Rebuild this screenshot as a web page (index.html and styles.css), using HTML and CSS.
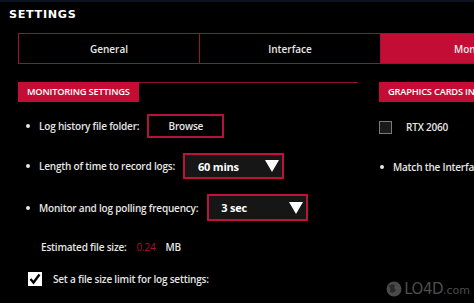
FILE: index.html
```html
<!DOCTYPE html>
<html lang="en">
<head>
    <meta charset="UTF-8">
    <meta name="viewport" content="width=device-width, initial-scale=1.0">
    <title>Settings</title>
    <link rel="stylesheet" href="styles.css">
</head>
<body>
    <div class="window">
        <h1 class="title">SETTINGS</h1>

        <div class="tabs">
            <div class="tab">General</div>
            <div class="tab">Interface</div>
            <div class="tab active">Monitoring</div>
        </div>

        <div class="content">
            <div class="panel left">
                <div class="section-head">
                    <div class="section-title">MONITORING SETTINGS</div>
                    <div class="section-line"></div>
                </div>

                <div class="row row-folder">
                    <span class="dot"></span>
                    <span class="label">Log history file folder:</span>
                    <button class="btn">Browse</button>
                </div>

                <div class="row row-length">
                    <span class="dot"></span>
                    <span class="label">Length of time to record logs:</span>
                    <div class="dropdown">
                        <span>60 mins</span>
                        <svg class="arrow" width="14" height="12" viewBox="0 0 14 12"><polygon points="0,0 14,0 7,12" fill="#fff"/></svg>
                    </div>
                </div>

                <div class="row row-poll">
                    <span class="dot"></span>
                    <span class="label">Monitor and log polling frequency:</span>
                    <div class="dropdown">
                        <span>3 sec</span>
                        <svg class="arrow" width="14" height="12" viewBox="0 0 14 12"><polygon points="0,0 14,0 7,12" fill="#fff"/></svg>
                    </div>
                </div>

                <div class="row row-size">
                    <span class="label">Estimated file size:</span>
                    <span class="value">0.24</span>
                    <span class="label">MB</span>
                </div>

                <div class="row row-limit">
                    <svg class="check" width="14" height="14" viewBox="0 0 14 14">
                        <rect width="14" height="14" fill="#fff"/>
                        <polyline points="2.5,7 5.5,10.5 11.5,2.5" fill="none" stroke="#000" stroke-width="2.4"/>
                    </svg>
                    <span class="label">Set a file size limit for log settings:</span>
                </div>
            </div>

            <div class="panel right">
                <div class="section-title">GRAPHICS CARDS INFORMATION</div>

                <div class="row row-gpu">
                    <span class="box"></span>
                    <span class="label">RTX 2060</span>
                </div>

                <div class="row row-match">
                    <span class="dot"></span>
                    <span class="label">Match the Interface color</span>
                </div>
            </div>
        </div>

        <div class="watermark">
            <svg width="18" height="16" viewBox="0 0 18 16">
                <circle cx="9" cy="8" r="7.5" fill="#4a4a4a"/>
                <path d="M4 5 Q7 2 10 4 Q8 7 11 9 Q9 13 5 11 Q6 8 4 5 Z" fill="#2a2a2a"/>
            </svg>
            <span class="wm-big">LO4D</span><span class="wm-small">.com</span>
        </div>
    </div>
</body>
</html>
```

FILE: styles.css
```css
body {
    margin: 0;
    padding: 0;
    background-color: #000;
    font-family: "Open Sans", Arial, sans-serif;
    color: #e6e6e6;
}

.window {
    position: relative;
    width: 474px;
    height: 303px;
    overflow: hidden;
    border-top: 2px solid #0b1220;
    box-sizing: border-box;
}

.title {
    margin: 0;
    padding: 7px 0 0 8px;
    height: 24px;
    box-sizing: border-box;
    font-family: "DejaVu Sans", sans-serif;
    font-weight: bold;
    font-size: 10px;
    letter-spacing: 0.6px;
    color: #fff;
    transform: scaleX(1.12);
    transform-origin: left;
}

.tabs {
    display: flex;
    margin: 7px 0 0 18px;
    height: 31px;
    width: 560px;
    border: 1px solid #9b1232;
    box-sizing: border-box;
}

.tab {
    flex-shrink: 0;
    width: 181px;
    box-sizing: border-box;
    display: flex;
    align-items: center;
    justify-content: center;
    font-size: 10px;
    font-weight: 600;
    color: #e8e8e8;
    border-right: 1px solid #9b1232;
}

.tab.active {
    background-color: #c40d35;
    border-right: none;
    justify-content: flex-start;
    padding-left: 73px;
}

.content {
    display: flex;
    margin-top: 18px;
}

.panel.left {
    flex-shrink: 0;
    width: 340px;
    margin-left: 18px;
}

.panel.right {
    margin-left: 21px;
    flex-shrink: 0;
    white-space: nowrap;
}

.section-head {
    display: flex;
    align-items: flex-start;
}

.section-title {
    background-color: #c40d35;
    color: #fff;
    font-size: 9.3px;
    font-weight: 600;
    height: 20px;
    line-height: 20px;
    padding: 0 9px;
    letter-spacing: -0.2px;
    white-space: nowrap;
}

.section-line {
    flex: 1;
    height: 1px;
    background-color: #8e1030;
}

.row {
    display: flex;
    align-items: center;
    font-size: 10px;
    font-weight: 600;
    letter-spacing: -0.2px;
}

.dot {
    width: 4px;
    height: 4px;
    border-radius: 50%;
    background-color: #e6e6e6;
    margin: 0 9px 0 8px;
}

.label {
    white-space: nowrap;
}

.btn {
    margin-left: 8px;
    width: 77px;
    height: 24px;
    background-color: #000;
    border: 2px solid #b0133b;
    color: #e8e8e8;
    font-family: "Open Sans", Arial, sans-serif;
    font-size: 10px;
    font-weight: 600;
    letter-spacing: -0.2px;
    padding: 0;
}

.dropdown {
    display: flex;
    align-items: center;
    justify-content: space-between;
    height: 26px;
    width: 101px;
    box-sizing: border-box;
    padding: 0 3px 0 13px;
    background-color: #161616;
    border: 2px solid #c0113b;
    color: #fff;
    font-size: 11px;
    font-weight: 700;
}

.row-folder {
    margin-top: 12px;
}

.row-length {
    margin-top: 15px;
}

.row-length .dropdown {
    margin-left: 8px;
}

.row-poll {
    margin-top: 15px;
}

.row-poll .dropdown {
    margin-left: 9px;
    height: 27px;
    padding-left: 12px;
}

.row-size {
    margin: 19px 0 0 23px;
}

.value {
    color: #a5142f;
    font-weight: 400;
    margin: 0 10px 0 10px;
}

.row-limit {
    margin: 18px 0 0 10px;
}

.check {
    margin-right: 11px;
}

.row-gpu {
    margin-top: 18px;
}

.box {
    width: 11px;
    height: 11px;
    background-color: #1a1a1a;
    border: 1.5px solid #7a7a7a;
    margin-right: 14px;
}

.row-match {
    margin-top: 26px;
}

.row-match .dot {
    margin: 0 9px 0 1px;
}

.watermark {
    position: absolute;
    right: 4px;
    bottom: 5px;
    display: flex;
    align-items: center;
    color: #4d4d4d;
}

.watermark svg {
    margin-right: 1px;
}

.wm-big {
    font-family: "DejaVu Sans", sans-serif;
    font-size: 15px;
    letter-spacing: -0.5px;
}

.wm-small {
    font-family: "DejaVu Sans", sans-serif;
    font-size: 11px;
    margin-top: 3px;
}
```
